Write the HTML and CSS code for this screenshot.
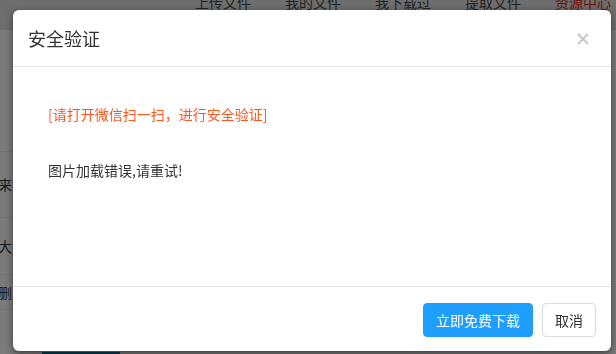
FILE: index.html
```html
<!DOCTYPE html>
<html lang="zh-CN">
<head>
    <meta charset="UTF-8">
    <meta name="viewport" content="width=device-width, initial-scale=1.0">
    <title>安全验证</title>
    <link rel="stylesheet" href="styles.css">
</head>
<body>
    <div class="page">
        <div class="topnav">
            <span class="nav-item">上传文件</span>
            <span class="nav-item">我的文件</span>
            <span class="nav-item">我下载过</span>
            <span class="nav-item">提取文件</span>
            <span class="nav-item active">资源中心</span>
        </div>
        <div class="side">
            <div class="side-row tall">来</div>
            <div class="side-row">大</div>
            <div class="side-row short">删</div>
        </div>
        <div class="page-btn"></div>
    </div>

    <div class="mask"></div>

    <div class="dialog">
        <div class="dialog-header">
            <span class="dialog-title">安全验证</span>
            <svg class="dialog-close" width="12" height="12" viewBox="0 0 12 12">
                <path d="M1 1L11 11M11 1L1 11" stroke="#c9c9c9" stroke-width="2.2" fill="none"/>
            </svg>
        </div>
        <div class="dialog-body">
            <p class="tip">[请打开微信扫一扫，进行安全验证]</p>
            <p class="msg">图片加载错误,请重试!</p>
        </div>
        <div class="dialog-footer">
            <div class="btn btn-primary">立即免费下载</div>
            <div class="btn">取消</div>
        </div>
    </div>
</body>
</html>
```

FILE: styles.css
```css
html, body {
    margin: 0;
    height: 100%;
}
body {
    font-family: "Noto Sans CJK SC", "Liberation Sans", sans-serif;
    font-size: 14px;
    color: #333;
    background-color: #f7f7f7;
    overflow: hidden;
}
.page {
    height: 100%;
}
.topnav {
    height: 30px;
    background-color: #dcdcdc;
    display: flex;
    padding-left: 195px;
    gap: 34px;
    line-height: 4px;
    color: #444;
}
.nav-item.active {
    color: #d81e06;
}
.side {
    padding-top: 121px;
    width: 40px;
}
.side-row {
    height: 56px;
    line-height: 56px;
    border-top: 1px solid #e4e4e4;
    color: #333;
    text-indent: -2px;
}
.side-row.tall {
    height: 65px;
    line-height: 65px;
}
.side-row.short {
    height: 34px;
    line-height: 34px;
    border-bottom: 1px solid #e4e4e4;
}
.page-btn {
    margin: 42px 0 0 42px;
    width: 78px;
    height: 10px;
    background-color: #1a7499;
}
.mask {
    position: fixed;
    top: 0;
    left: 0;
    right: 0;
    bottom: 0;
    background-color: rgba(0,0,0,0.5);
}
.dialog {
    position: fixed;
    left: 13px;
    top: 10px;
    width: 598px;
    height: 341px;
    background-color: white;
    border-radius: 6px;
    box-shadow: 0 3px 9px rgba(0,0,0,0.5);
    display: flex;
    flex-direction: column;
}
.dialog-header {
    height: 56px;
    border-bottom: 1px solid #e5e5e5;
    display: flex;
    align-items: center;
    justify-content: space-between;
    padding: 0 22px 0 15px;
}
.dialog-title {
    font-size: 18px;
    color: #333;
}
.dialog-close {
    margin-top: 2px;
}
.dialog-body {
    flex: 1;
    padding: 37px 35px 0;
}
.dialog-body p {
    margin: 0;
    line-height: 20px;
}
.tip {
    color: #ff5722;
}
.msg {
    margin-top: 36px !important;
    color: #333;
}
.dialog-footer {
    height: 63px;
    border-top: 1px solid #e5e5e5;
    display: flex;
    align-items: center;
    justify-content: flex-end;
    gap: 9px;
    padding: 1px 15px 0 0;
}
.btn {
    height: 32px;
    line-height: 32px;
    padding: 0 12px;
    border: 1px solid #dcdcdc;
    border-radius: 4px;
    background-color: white;
    color: #333;
    font-size: 14px;
}
.btn-primary {
    background-color: #1e9fff;
    border-color: #1e9fff;
    color: white;
}
```
